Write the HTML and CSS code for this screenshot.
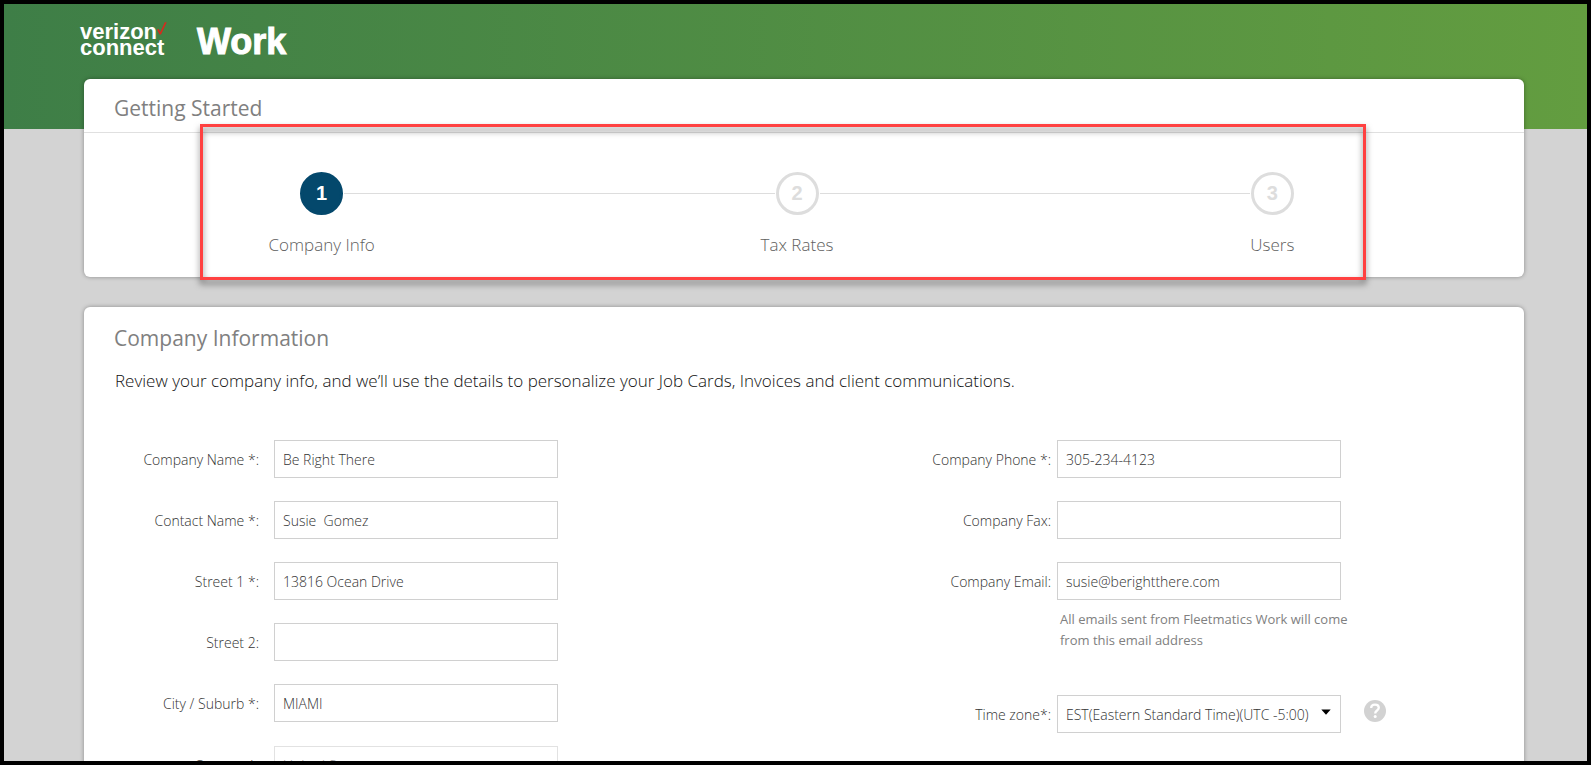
FILE: index.html
```html
<!DOCTYPE html>
<html lang="en">
<head>
<meta charset="utf-8">
<title>Getting Started - Verizon Connect Work</title>
<link rel="stylesheet" href="styles.css">
</head>
<body>
<div class="frame">
  <header class="topbar">
    <div class="logo">
      <span class="logo-line">verizon<svg class="logo-check" viewBox="0 0 10 13" aria-hidden="true"><path d="M0 7.6 L1.8 7 L3.3 10 L7.8 0.3 L9.7 0.3 L4 12.4 L2.5 12.4 Z"/></svg></span>
      <span class="logo-line">connect</span>
    </div>
    <div class="product">Work</div>
  </header>

  <main class="content">
    <section class="card wizard">
      <h1 class="card-title wizard-title">Getting Started</h1>
      <ol class="steps">
        <li class="step active"><span class="track"><span class="marker">1</span></span><span class="step-name">Company Info</span></li>
        <li class="step"><span class="track"><span class="marker">2</span></span><span class="step-name">Tax Rates</span></li>
        <li class="step"><span class="track"><span class="marker">3</span></span><span class="step-name">Users</span></li>
      </ol>
      <div class="highlight"></div>
    </section>

    <section class="card company">
      <h2 class="card-title">Company Information</h2>
      <p class="intro">Review your company info, and we’ll use the details to personalize your Job Cards, Invoices and client communications.</p>
      <form class="form">
        <div class="column column-left">
          <div class="field"><label for="name">Company Name *:</label><input class="control" id="name" type="text" value="Be Right There"></div>
          <div class="field"><label for="contact">Contact Name *:</label><input class="control" id="contact" type="text" value="Susie  Gomez"></div>
          <div class="field"><label for="street1">Street 1 *:</label><input class="control" id="street1" type="text" value="13816 Ocean Drive"></div>
          <div class="field"><label for="street2">Street 2:</label><input class="control" id="street2" type="text"></div>
          <div class="field"><label for="city">City / Suburb *:</label><input class="control" id="city" type="text" value="MIAMI"></div>
          <div class="field"><label for="country">Country *:</label><select class="control" id="country" disabled><option>United States</option></select></div>
        </div>
        <div class="column column-right">
          <div class="field"><label for="phone">Company Phone *:</label><input class="control" id="phone" type="tel" value="305-234-4123"></div>
          <div class="field"><label for="fax">Company Fax:</label><input class="control" id="fax" type="tel"></div>
          <div class="field"><label for="email">Company Email:</label><input class="control" id="email" type="email" value="susie@berightthere.com" aria-describedby="email-hint"></div>
          <p class="hint" id="email-hint">All emails sent from Fleetmatics Work will come from this email address</p>
          <div class="field"><label for="zone">Time zone*:</label><span class="select-wrap"><select class="control" id="zone"><option>EST(Eastern Standard Time)(UTC -5:00)</option></select><svg class="arrow" viewBox="0 0 10 6" aria-hidden="true"><path d="M0.3 0.5H9.7L5 5.8Z"/></svg></span>
            <button class="help" type="button" aria-label="Time zone help"><svg viewBox="0 0 22 22" aria-hidden="true"><circle cx="11" cy="11" r="11" fill="#d2d2d2"/><path d="M7.2 8C7.2 5.6 8.8 4.6 11 4.6C13.3 4.6 14.8 5.8 14.8 7.8C14.8 10.4 11.2 10.6 11.2 13.4" fill="none" stroke="#fff" stroke-width="2.3"/><circle cx="11.2" cy="16.6" r="1.5" fill="#fff"/></svg></button></div>
        </div>
      </form>
    </section>
  </main>
</div>
</body>
</html>
```
FILE: styles.css
```css
* { box-sizing: border-box; }

body {
  margin: 0;
  font-family: "Open Sans", "Noto Sans", sans-serif;
  color: #444;
}

.frame {
  height: 100vh;
  overflow: hidden;
  border: 4px solid #000;
  background: #d3d3d3;
}

.topbar {
  display: flex;
  align-items: flex-start;
  gap: 30px;
  height: 125px;
  padding: 16px 76px;
  background: linear-gradient(to right, #3e7e47, #639d40);
  color: #fff;
  font-family: "Liberation Sans", Arial, sans-serif;
  font-weight: bold;
}

.logo { font-size: 22px; line-height: 16px; padding-top: 4px; }
.logo-line { display: flex; align-items: flex-start; }
.logo-check { width: 10px; height: 13px; fill: #d52b1e; margin-top: -2px; }
.product { font-size: 36px; line-height: 44px; -webkit-text-stroke: 1px #fff; }

.content { padding: 0 63px 0 80px; margin-top: -50px; }

.card {
  position: relative;
  margin-bottom: 30px;
  border-radius: 6px;
  background: #fff;
  box-shadow: 0 0 4px rgba(0, 0, 0, 0.35);
}

.card-title {
  margin: 0;
  padding: 0 30px;
  color: #808080;
  font-size: 21px;
  line-height: 30px;
  font-weight: 400;
}

.wizard-title { padding-top: 14px; padding-bottom: 9px; border-bottom: 1px solid #e0e0e0; }

.steps {
  display: grid;
  grid-template-columns: repeat(3, 1fr);
  margin: 0;
  padding: 39px 14px 20px 0;
  list-style: none;
}

.step { display: flex; flex-direction: column; gap: 18px; text-align: center; }
.track { display: flex; align-items: center; gap: 1px; }
.track::before, .track::after { content: ""; flex: 1; height: 1px; background: #ddd; }
.step:first-child .track::before, .step:last-child .track::after { background: none; }

.marker {
  width: 43px;
  height: 43px;
  border: 3px solid #ddd;
  border-radius: 50%;
  color: #ddd;
  font: bold 20px/37px "Liberation Sans", Arial, sans-serif;
}

.active .marker { border-color: #04486c; background: #04486c; color: #fff; }
.step-name { color: #606060; font-size: 17px; line-height: 24px; font-weight: 300; }

.highlight {
  position: absolute;
  top: 45px;
  bottom: -3px;
  left: 116px;
  right: 158px;
  border: 3px solid #ff4141;
  filter: drop-shadow(0 4px 3px rgba(0, 0, 0, 0.5));
  pointer-events: none;
}

.company { padding-top: 16px; }

.intro { margin: 0; padding: 15px 31px 46px; font-size: 17px; line-height: 26px; font-weight: 300; color: #111; }

.form { display: grid; grid-template-columns: 49fr 41fr; }
.column { display: flex; flex-direction: column; gap: 23px; }
.field { display: flex; align-items: center; font-size: 14px; font-weight: 300; color: #333; }
.field label { text-align: right; }
.column-left .field { gap: 15px; }
.column-left .field:last-child { padding-top: 1px; }
.column-left label { width: 175px; }
.column-right .field { gap: 6px; }
.column-right label { width: 183px; white-space: nowrap; }

.control {
  width: 284px;
  height: 38px;
  padding: 0 8px;
  border: 1px solid #d0d0d0;
  border-radius: 0;
  background: #fff;
  color: #333;
  font: inherit;
  appearance: none;
}

.control:disabled { border-color: #e2e2e2; color: #999; opacity: 1; }

.hint { width: 300px; margin: -14px 0 21px 192px; color: #808080; font-size: 13px; line-height: 21px; }

.select-wrap { position: relative; display: flex; }
.arrow { position: absolute; right: 10px; top: 14px; width: 10px; height: 6px; pointer-events: none; }

.help { margin: 0 0 6px 17px; padding: 0; border: 0; background: none; line-height: 0; }
.help svg { width: 22px; height: 22px; }
```
